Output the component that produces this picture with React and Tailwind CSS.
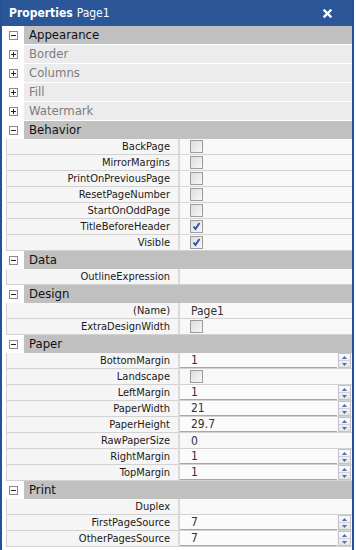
import React from "react";

const FONT = { fontFamily: '"DejaVu Sans Condensed", Tahoma, "DejaVu Sans", sans-serif' };

function Box({ open }) {
  return (
    <div className="w-[9px] h-[9px] border border-[#8a8a8a] bg-[#fdfdfd] relative">
      <div className="absolute left-[1px] top-[3px] w-[5px] h-[1px] bg-[#222]" />
      {!open && <div className="absolute left-[3px] top-[1px] w-[1px] h-[5px] bg-[#222]" />}
    </div>
  );
}

function Band({ title, open, light, gap }) {
  return (
    <div className={`flex h-[18px] ${gap ? "mb-[1px]" : ""}`}>
      <div className="w-[22px] bg-white flex items-center pl-[7px]">
        <Box open={open} />
      </div>
      <div
        className={`flex-1 flex items-center pl-[5px] text-[13px] ${
          light ? "bg-[#ececec] text-[#7d7d7d]" : "bg-[#c0c0c0] text-[#111]"
        }`}
      >
        {title}
      </div>
    </div>
  );
}

function Check({ checked }) {
  return (
    <div className="w-[13px] h-[13px] border border-[#9c9c9c] bg-gradient-to-br from-[#dcdcdc] to-[#f8f8f8] flex items-center justify-center">
      {checked && (
        <svg width="9" height="9" viewBox="0 0 9 9">
          <path d="M1.5 4.5 L3.5 7 L7.5 1" stroke="#2a48a8" strokeWidth="1.8" fill="none" />
        </svg>
      )}
    </div>
  );
}

function Spinner() {
  return (
    <div className="w-[13px] h-[15px] flex flex-col border border-[#c2c2c2] bg-gradient-to-b from-[#fafafa] to-[#e6e6e6]">
      <div className="flex-1 flex items-center justify-center border-b border-[#cfcfcf]">
        <svg width="5" height="3" viewBox="0 0 5 3">
          <path d="M0 3 L2.5 0 L5 3 Z" fill="#4a6cc0" />
        </svg>
      </div>
      <div className="flex-1 flex items-center justify-center">
        <svg width="5" height="3" viewBox="0 0 5 3">
          <path d="M0 0 L2.5 3 L5 0 Z" fill="#4a6cc0" />
        </svg>
      </div>
    </div>
  );
}

function Row({ name, type, value }) {
  return (
    <div className="flex h-[16px] ml-[4px]">
      <div className="w-[174px] border-l border-[#cfcfcf] border-r-2 border-r-[#dadada] border-b border-b-[#d2d2d2] bg-[#f5f5f5] flex items-center justify-end pr-[8px] text-[11px] text-[#1a1a1a] leading-none">
        {name}
      </div>
      {type === "spin" ? (
        <div className="flex-1 flex bg-[#f8f8f8] border-b border-[#d2d2d2]">
          <div className="flex-1 flex items-center pl-[11px] text-[12px] text-[#333] bg-[#fbfbfb] border-b border-[#a8a8a8] leading-none">
            {value}
          </div>
          <div className="w-[15px] flex items-start pl-[1px]">
            <Spinner />
          </div>
        </div>
      ) : (
        <div className="flex-1 flex items-center pl-[10px] bg-[#f8f8f8] border-b border-[#d2d2d2] text-[12px] text-[#333] leading-none">
          {type === "check" && <Check />}
          {type === "checked" && <Check checked />}
          {type === "text" && <span className="pl-[1px]">{value}</span>}
        </div>
      )}
    </div>
  );
}

export default function App() {
  return (
    <div className="w-[356px] h-[550px] bg-white overflow-hidden" style={FONT}>
      <div className="w-[354px] h-[550px] border-l-2 border-r-2 border-[#26509a] flex flex-col">
        <div className="h-[26px] bg-[#2b5799] flex items-center pl-[7px] pr-[20px] text-white text-[12px]">
          <span className="font-bold">Properties</span>
          <span className="ml-[4px]">Page1</span>
          <div className="flex-1" />
          <svg width="9" height="9" viewBox="0 0 9 9">
            <path d="M1.5 1.5 L7.5 7.5 M7.5 1.5 L1.5 7.5" stroke="#ffffff" strokeWidth="2.4" strokeLinecap="square" />
          </svg>
        </div>
        <Band title="Appearance" open gap />
        <Band title="Border" light gap />
        <Band title="Columns" light gap />
        <Band title="Fill" light gap />
        <Band title="Watermark" light gap />
        <Band title="Behavior" open />
        <Row name="BackPage" type="check" />
        <Row name="MirrorMargins" type="check" />
        <Row name="PrintOnPreviousPage" type="check" />
        <Row name="ResetPageNumber" type="check" />
        <Row name="StartOnOddPage" type="check" />
        <Row name="TitleBeforeHeader" type="checked" />
        <Row name="Visible" type="checked" />
        <Band title="Data" open />
        <Row name="OutlineExpression" type="empty" />
        <Band title="Design" open />
        <Row name="(Name)" type="text" value="Page1" />
        <Row name="ExtraDesignWidth" type="check" />
        <Band title="Paper" open />
        <Row name="BottomMargin" type="spin" value="1" />
        <Row name="Landscape" type="check" />
        <Row name="LeftMargin" type="spin" value="1" />
        <Row name="PaperWidth" type="spin" value="21" />
        <Row name="PaperHeight" type="spin" value="29.7" />
        <Row name="RawPaperSize" type="text" value="0" />
        <Row name="RightMargin" type="spin" value="1" />
        <Row name="TopMargin" type="spin" value="1" />
        <Band title="Print" open />
        <Row name="Duplex" type="empty" />
        <Row name="FirstPageSource" type="spin" value="7" />
        <Row name="OtherPagesSource" type="spin" value="7" />
      </div>
    </div>
  );
}
